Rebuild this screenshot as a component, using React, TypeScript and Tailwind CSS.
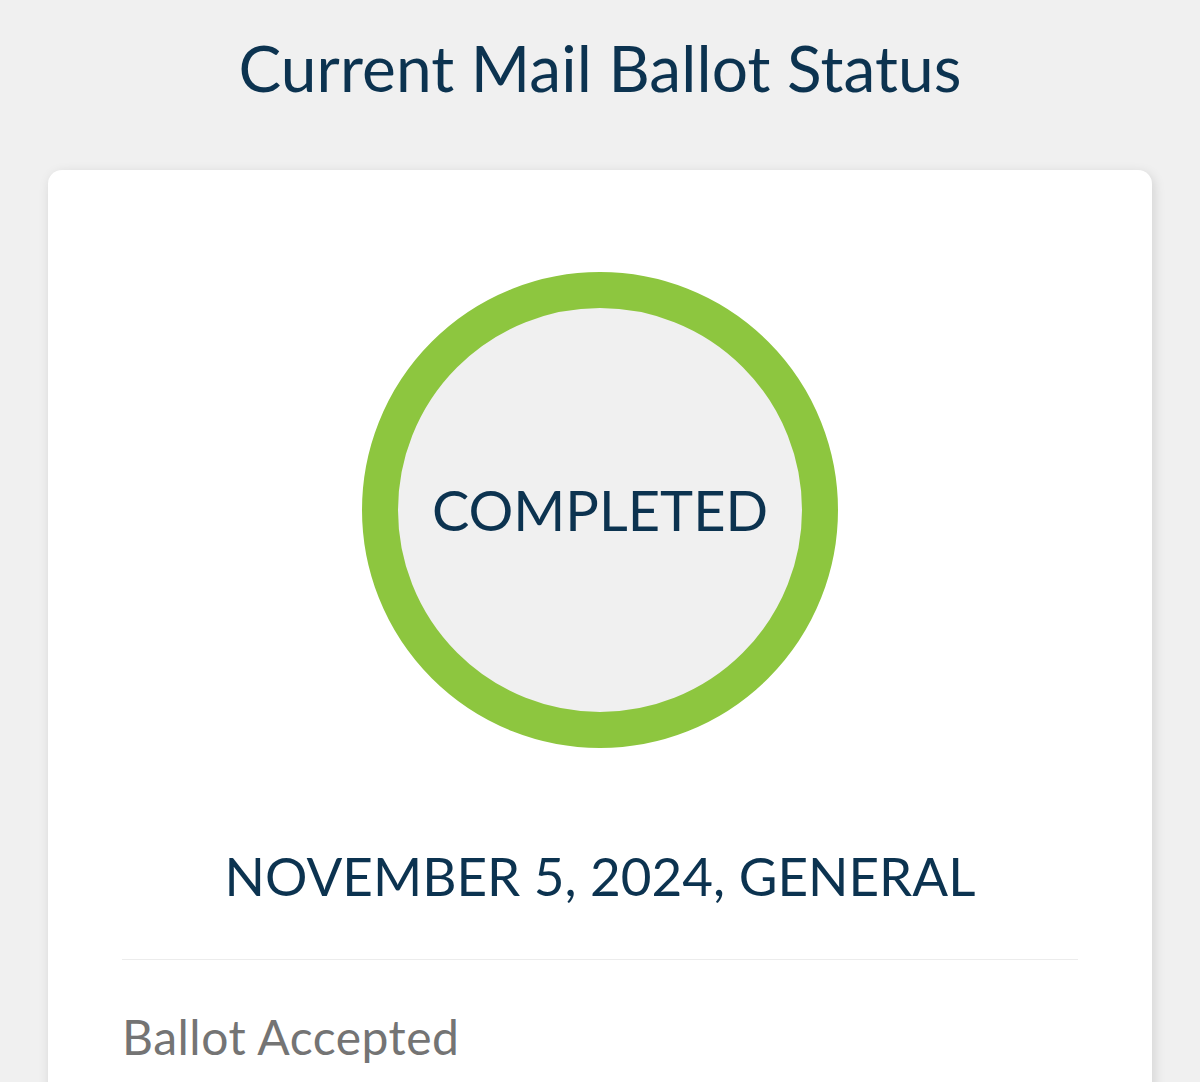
import React from "react";

export default function App() {
  return (
    <div
      className="min-h-[1082px] w-[1200px] bg-[#f0f0f0] overflow-hidden"
      style={{ fontFamily: "Lato, 'Open Sans', sans-serif" }}
    >
      <h1 className="pt-[30px] text-center text-[64px] leading-[1.2] font-normal text-[#0c3350] tracking-[0.1px]">
        Current Mail Ballot Status
      </h1>
      <div className="mx-[48px] mt-[63px] h-[1000px] rounded-[14px] bg-white shadow-[2px_3px_12px_rgba(0,0,0,0.13)] px-[74px] pt-[102px]">
        <div className="flex justify-center">
          <div className="flex h-[476px] w-[476px] items-center justify-center rounded-full border-[36px] border-[#8dc63f] bg-[#f0f0f0]">
            <span className="text-[56px] leading-[1.2] text-[#0c3350]">COMPLETED</span>
          </div>
        </div>
        <div className="mt-[96px] text-center text-[53px] leading-[1.2] text-[#0c3350]">
          NOVEMBER 5, 2024, GENERAL
        </div>
        <div className="mt-[52px] h-px bg-[#ececec]" />
        <div className="mt-[48px] text-[48px] leading-[1.2] text-[#747474] tracking-[0.5px]">Ballot Accepted</div>
      </div>
    </div>
  );
}
